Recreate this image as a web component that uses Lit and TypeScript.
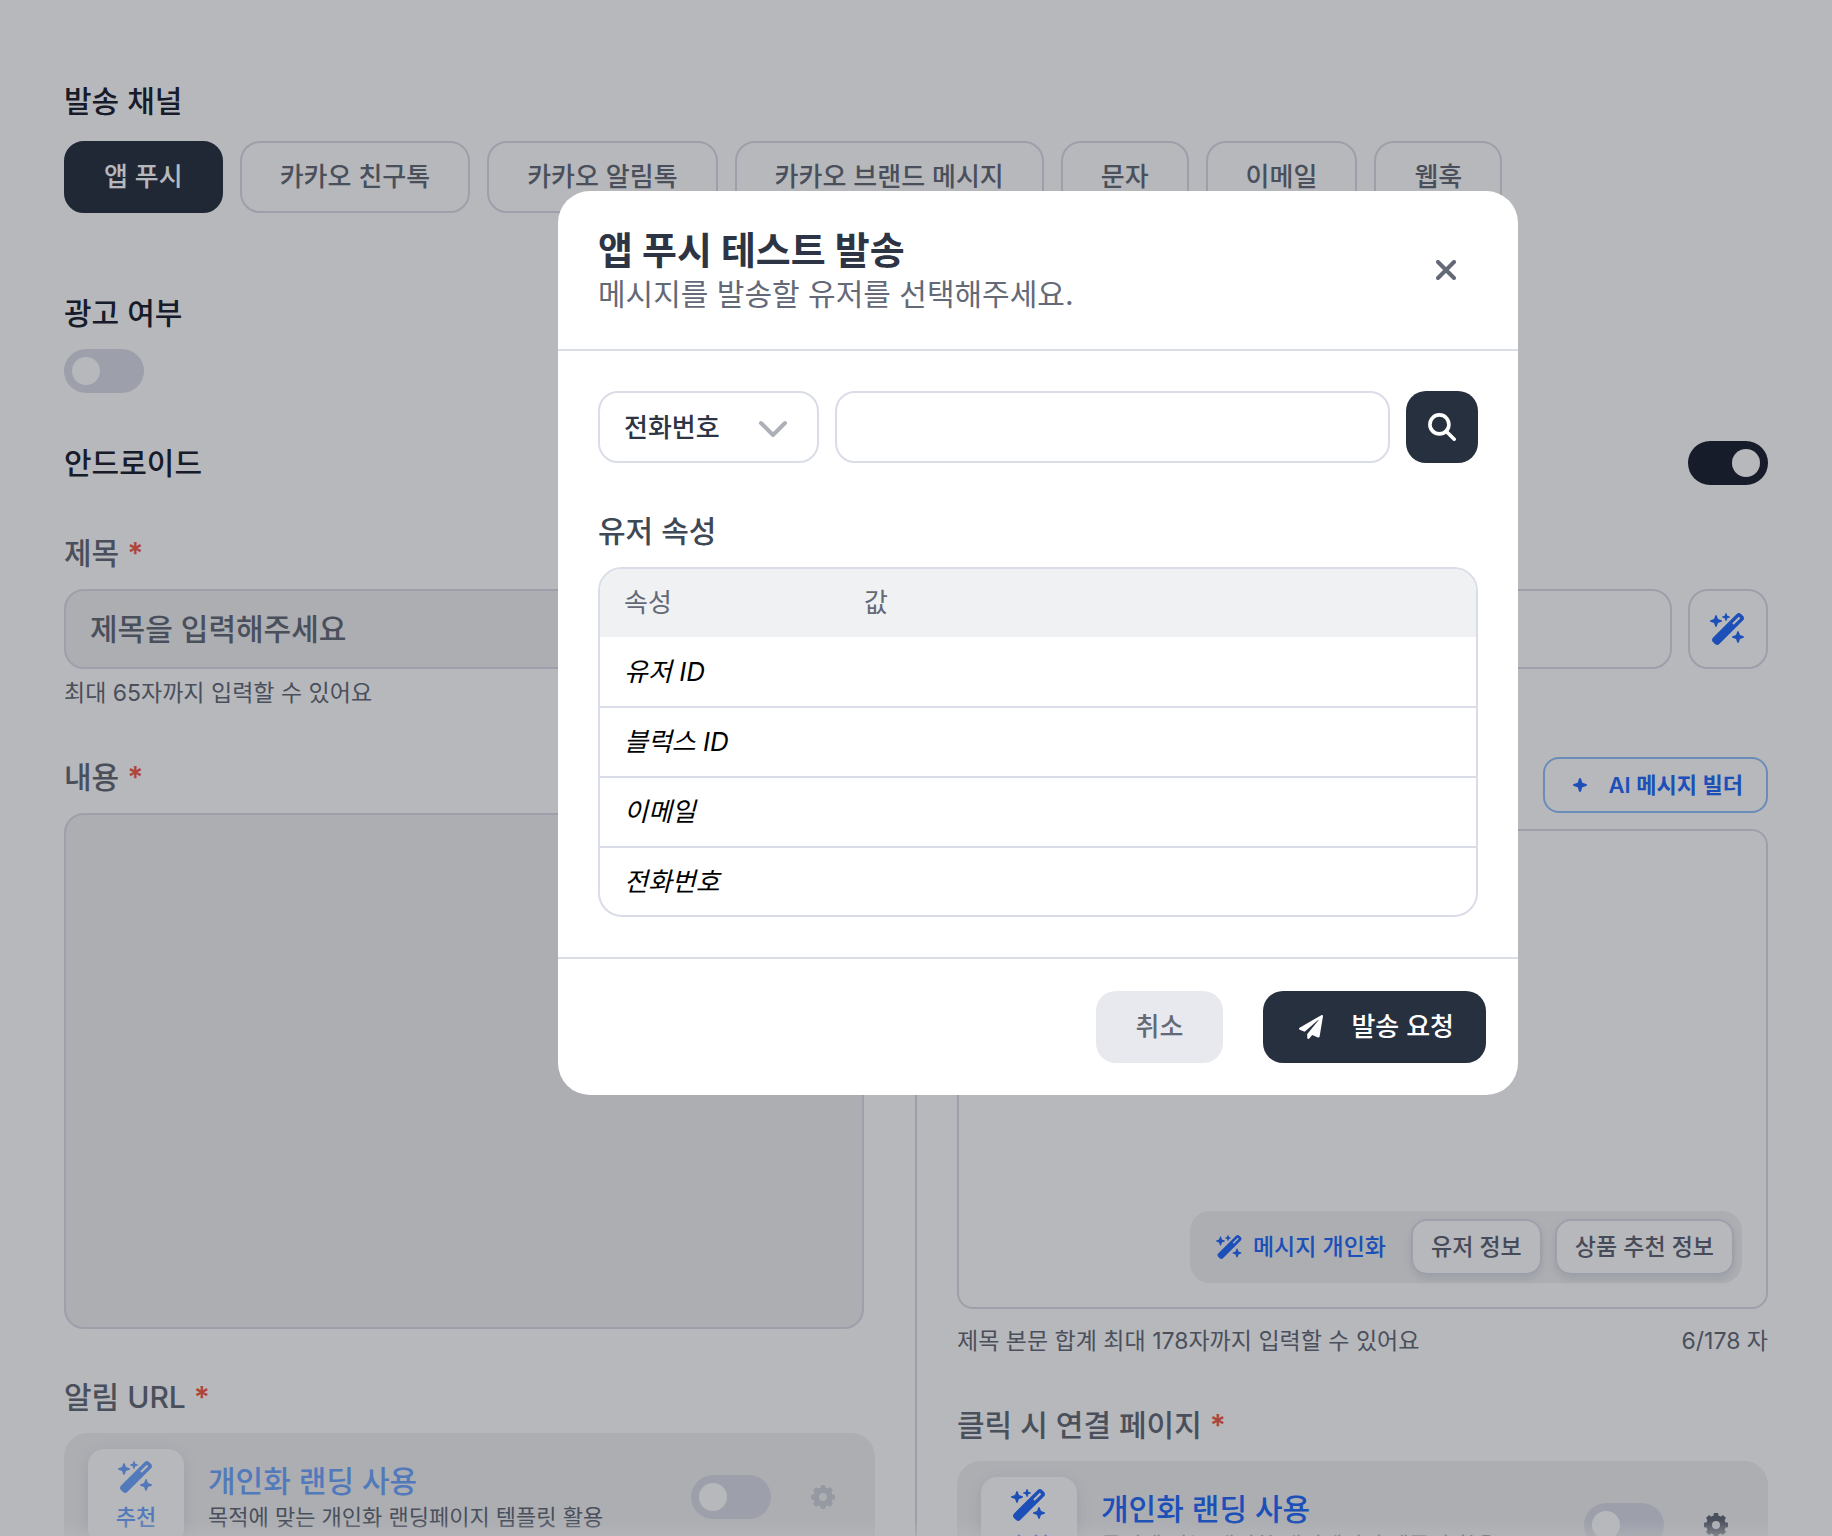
import { LitElement, html, css, svg, nothing } from "lit";
import { customElement, property } from "lit/decorators.js";

const WAND =
  "M234.7 42.7L197 56.8c-3 1.1-5 4-5 7.2s2 6.1 5 7.2l37.7 14.1L248.8 123c1.1 3 4 5 7.2 5s6.1-2 7.2-5l14.1-37.7L315 71.2c3-1.1 5-4 5-7.2s-2-6.1-5-7.2L277.3 42.7 263.2 5c-1.1-3-4-5-7.2-5s-6.1 2-7.2 5L234.7 42.7zM46.1 395.4c-18.7 18.7-18.7 49.1 0 67.9l34.6 34.6c18.7 18.7 49.1 18.7 67.9 0L529.9 116.5c18.7-18.7 18.7-49.1 0-67.9L495.3 14.1c-18.7-18.7-49.1-18.7-67.9 0L46.1 395.4zM484.6 82.6l-105 105-23.3-23.3 105-105 23.3 23.3zM7.5 117.2C3 118.9 0 123.2 0 128s3 9.1 7.5 10.8L64 160l21.2 56.5c1.7 4.5 6 7.5 10.8 7.5s9.1-3 10.8-7.5L128 160l56.5-21.2c4.5-1.7 7.5-6 7.5-10.8s-3-9.1-7.5-10.8L128 96 106.8 39.5C105.1 35 100.8 32 96 32s-9.1 3-10.8 7.5L64 96 7.5 117.2zm352 256c-4.5 1.7-7.5 6-7.5 10.8s3 9.1 7.5 10.8L416 416l21.2 56.5c1.7 4.5 6 7.5 10.8 7.5s9.1-3 10.8-7.5L480 416l56.5-21.2c4.5-1.7 7.5-6 7.5-10.8s-3-9.1-7.5-10.8L480 352l-21.2-56.5c-1.7-4.5-6-7.5-10.8-7.5s-9.1 3-10.8 7.5L416 352l-56.5 21.2z";
const PLANE =
  "M476 3.2L12.5 270.6c-18.1 10.4-15.8 35.6 2.2 43.2L121 358.4l287.3-253.2c5.5-4.9 13.3 2.6 8.6 8.3L176 407v80.5c0 23.6 28.5 32.9 42.5 15.8L282 426l124.6 52.2c14.2 6 30.4-2.9 33-18.2l72-432C515 7.8 493.3-6.8 476 3.2z";

const wand = (size: number) => html`
  <svg width=${(size * 9) / 8} height=${size} viewBox="0 0 576 512" fill="currentColor" aria-hidden="true">
    <path d=${WAND}></path>
  </svg>
`;

const gear = html`
  <svg width="24" height="24" viewBox="0 0 24 24" fill="currentColor" aria-hidden="true">
    <circle cx="12" cy="12" r="6.9" fill="none" stroke="currentColor" stroke-width="5.8"></circle>
    ${[0, 45, 90, 135, 180, 225, 270, 315].map(
      (a) => svg`<rect x="9.6" y="0" width="4.8" height="5" rx="1" transform="rotate(${a} 12 12)"></rect>`
    )}
  </svg>
`;

const base = css`
  * {
    box-sizing: border-box;
  }
  button,
  input,
  select,
  textarea {
    font: inherit;
    color: inherit;
    margin: 0;
    padding: 0;
    outline: none;
  }
  button {
    display: inline-flex;
    align-items: center;
    justify-content: center;
    border: none;
    background: none;
    line-height: 32px;
    white-space: nowrap;
  }
  svg {
    display: block;
    flex: none;
  }
  .toggle {
    appearance: none;
    flex: none;
    display: block;
    width: 80px;
    height: 44px;
    padding: 8px;
    border-radius: 22px;
    background: var(--line);
  }
  .toggle::before {
    content: "";
    display: block;
    width: 28px;
    height: 28px;
    border-radius: 50%;
    background: #fff;
  }
  .toggle:checked {
    background: var(--ink);
  }
  .toggle:checked::before {
    margin-left: auto;
  }
`;

@customElement("landing-card")
class LandingCard extends LitElement {
  @property({ type: Boolean }) muted = false;

  static styles = [
    base,
    css`
      :host {
        display: block;
      }
      .card {
        display: flex;
        align-items: center;
        gap: 24px;
        padding: 16px 24px;
        border-radius: 24px;
        background: var(--fill);
        --accent: var(--blue);
        --gear: var(--gray);
      }
      .card.muted {
        --accent: #6fa6ff;
        --gear: #cfd3dc;
      }
      .badge {
        flex: none;
        display: flex;
        flex-direction: column;
        align-items: center;
        gap: 8px;
        width: 96px;
        height: 96px;
        padding-top: 12px;
        border-radius: 16px;
        background: #fff;
        box-shadow: 0 4px 16px rgba(60, 70, 110, 0.12);
        color: var(--accent);
      }
      .badge span {
        font-size: 22px;
        line-height: 32px;
        font-weight: 500;
      }
      .text {
        flex: 1;
        min-width: 0;
        white-space: nowrap;
      }
      .title {
        font-size: 30px;
        line-height: 40px;
        font-weight: 500;
        color: var(--accent);
      }
      .desc {
        font-size: 22px;
        line-height: 32px;
        color: var(--gray);
      }
      .gear {
        padding: 16px;
        color: var(--gear);
      }
    `,
  ];

  render() {
    return html`
      <div class="card ${this.muted ? "muted" : ""}">
        <div class="badge">${wand(32)}<span>추천</span></div>
        <label class="text" for="use">
          <div class="title">개인화 랜딩 사용</div>
          <div class="desc">목적에 맞는 개인화 랜딩페이지 템플릿 활용</div>
        </label>
        <input id="use" class="toggle" type="checkbox" role="switch" ?disabled=${this.muted} />
        <button class="gear" type="button" aria-label="설정" ?disabled=${this.muted}>${gear}</button>
      </div>
    `;
  }
}

@customElement("test-send-dialog")
class TestSendDialog extends LitElement {
  static styles = [
    base,
    css`
      :host {
        display: block;
        width: 960px;
        max-width: 100%;
      }
      .dialog {
        border-radius: 32px;
        background: #fff;
        overflow: hidden;
      }
      header {
        display: flex;
        align-items: center;
        justify-content: space-between;
        padding: 35px 40px;
        border-bottom: 2px solid var(--line);
      }
      h2 {
        margin: 0;
        font-size: 38px;
        line-height: 48px;
        font-weight: 700;
        color: #2d3544;
      }
      header p {
        margin: 0;
        font-size: 30px;
        line-height: 40px;
        color: var(--gray);
      }
      .close {
        width: 64px;
        height: 64px;
        color: var(--gray);
      }
      .body {
        padding: 40px;
      }
      .search {
        display: flex;
        gap: 16px;
      }
      .select {
        position: relative;
        width: 221px;
        color: #2d3544;
      }
      .select select {
        appearance: none;
        width: 100%;
        height: 72px;
        padding: 0 24px;
        border: 2px solid var(--line);
        border-radius: 20px;
        background: #fff;
        font-size: 26px;
        font-weight: 500;
      }
      .select svg {
        position: absolute;
        right: 30px;
        top: 28px;
        pointer-events: none;
      }
      .query {
        flex: 1;
        min-width: 0;
        height: 72px;
        padding: 0 24px;
        border: 2px solid var(--line);
        border-radius: 20px;
        font-size: 26px;
      }
      .go {
        width: 72px;
        height: 72px;
        border-radius: 20px;
        background: var(--navy);
        color: #fff;
      }
      h3 {
        margin: 48px 0 16px;
        font-size: 30px;
        line-height: 40px;
        font-weight: 500;
        color: #3f4855;
      }
      .table {
        border: 2px solid var(--line);
        border-radius: 24px;
        overflow: hidden;
      }
      table {
        width: 100%;
        border-collapse: collapse;
        table-layout: fixed;
        font-size: 26px;
        line-height: 36px;
      }
      th {
        height: 68px;
        padding: 0 24px;
        background: var(--fill);
        font-weight: 400;
        text-align: left;
        color: var(--gray);
      }
      .name {
        width: 240px;
      }
      td {
        height: 70px;
        padding: 0 24px;
        border-bottom: 2px solid var(--line);
        font-style: italic;
        color: #000;
      }
      tr:last-child td {
        height: 68px;
        border-bottom: none;
      }
      footer {
        display: flex;
        justify-content: flex-end;
        gap: 40px;
        padding: 32px;
        border-top: 2px solid var(--line);
      }
      footer button {
        height: 72px;
        border-radius: 20px;
        font-size: 26px;
        font-weight: 500;
      }
      .cancel {
        padding: 0 40px;
        background: #e8e9ef;
        color: var(--gray);
      }
      .send {
        gap: 28px;
        padding: 0 32px 0 36px;
        background: var(--navy);
        color: #fff;
      }
    `,
  ];

  render() {
    return html`
      <section class="dialog" role="dialog" aria-modal="true" aria-labelledby="dialog-title">
        <header>
          <div>
            <h2 id="dialog-title">앱 푸시 테스트 발송</h2>
            <p>메시지를 발송할 유저를 선택해주세요.</p>
          </div>
          <button class="close" type="button" aria-label="닫기">
            <svg width="20" height="20" viewBox="0 0 20 20" fill="none" stroke="currentColor" stroke-width="4" stroke-linecap="round">
              <path d="M2 2l16 16M18 2L2 18"></path>
            </svg>
          </button>
        </header>
        <div class="body">
          <div class="search">
            <div class="select">
              <select id="field" aria-label="속성">
                <option>전화번호</option>
              </select>
              <svg width="32" height="20" viewBox="0 0 32 20" fill="none" stroke="#adafb9" stroke-width="4" stroke-linecap="round" stroke-linejoin="round">
                <path d="M4 4l12 12L28 4"></path>
              </svg>
            </div>
            <input class="query" type="text" aria-labelledby="field" />
            <button class="go" type="button" aria-label="검색">
              <svg width="28" height="28" viewBox="0 0 28 28" fill="none" stroke="currentColor" stroke-width="3.6" stroke-linecap="round">
                <circle cx="11.4" cy="11.4" r="9.5"></circle>
                <path d="M18.4 18.4l7.8 7.8"></path>
              </svg>
            </button>
          </div>
          <h3>유저 속성</h3>
          <div class="table">
            <table>
              <thead>
                <tr>
                  <th class="name">속성</th>
                  <th>값</th>
                </tr>
              </thead>
              <tbody>
                ${["유저 ID", "블럭스 ID", "이메일", "전화번호"].map(
                  (name) => html`<tr><td>${name}</td><td></td></tr>`
                )}
              </tbody>
            </table>
          </div>
        </div>
        <footer>
          <button class="cancel" type="button">취소</button>
          <button class="send" type="button">
            <svg width="24" height="24" viewBox="0 0 512 512" fill="currentColor" aria-hidden="true">
              <path d=${PLANE}></path>
            </svg>
            발송 요청
          </button>
        </footer>
      </section>
    `;
  }
}

@customElement("app-root")
class AppRoot extends LitElement {
  static styles = [
    base,
    css`
      :host {
        --ink: #19202e;
        --navy: #27303f;
        --gray: #636977;
        --line: #dadde8;
        --fill: #f0f1f3;
        --blue: #2269fb;
        display: block;
        position: relative;
        height: 100vh;
        overflow: hidden;
        background: #fff;
        font-family: Inter, "Noto Sans CJK KR", sans-serif;
        color: var(--ink);
      }
      main {
        padding: 81px 64px 0;
      }
      h1,
      .heading {
        display: block;
        margin: 0;
        font-size: 30px;
        line-height: 40px;
        font-weight: 500;
        color: var(--ink);
      }
      .channels {
        display: flex;
        flex-wrap: wrap;
        gap: 17px;
        margin: 20px 0 80px;
      }
      .channels button {
        height: 72px;
        padding: 0 38px;
        border: 2px solid var(--line);
        border-radius: 20px;
        font-size: 26px;
        font-weight: 500;
        color: var(--gray);
      }
      .channels .active {
        border-color: var(--navy);
        background: var(--navy);
        color: #fff;
      }
      .ad {
        display: grid;
        gap: 16px;
        justify-items: start;
        margin-bottom: 48px;
      }
      .platforms {
        display: grid;
        grid-template-columns: minmax(0, 1fr) 2px minmax(0, 1fr);
        gap: 40px;
      }
      .divider {
        background: var(--line);
      }
      .platform {
        display: grid;
        grid-template-columns: minmax(0, 1fr);
        gap: 48px;
        align-content: start;
      }
      .head {
        display: flex;
        align-items: center;
        justify-content: space-between;
        min-height: 44px;
      }
      .head .toggle {
        margin-left: auto;
      }
      .field {
        display: flex;
        flex-direction: column;
        gap: 16px;
      }
      .label {
        min-height: 40px;
        font-size: 30px;
        line-height: 40px;
        font-weight: 500;
        color: var(--gray);
      }
      .label span {
        font-weight: 600;
        color: #f45a48;
      }
      .control {
        display: flex;
        gap: 16px;
      }
      .input,
      .area {
        display: block;
        border: 2px solid var(--line);
        border-radius: 20px;
        background: transparent;
        font-size: 30px;
        font-weight: 500;
        resize: none;
      }
      .input {
        flex: 1;
        min-width: 0;
        height: 80px;
        padding: 0 24px;
      }
      .input::placeholder {
        color: var(--gray);
        opacity: 1;
      }
      .input:disabled,
      .area:disabled {
        background: var(--fill);
      }
      .area:disabled {
        width: 100%;
        height: 516px;
      }
      .narrow {
        padding-right: 11px;
      }
      .wand {
        width: 80px;
        height: 80px;
        border: 2px solid var(--line);
        border-radius: 20px;
        color: var(--blue);
      }
      .help {
        min-height: 32px;
        font-size: 23px;
        line-height: 32px;
        color: var(--gray);
      }
      .help.near {
        margin-top: -8px;
      }
      .help.split {
        display: flex;
        justify-content: space-between;
      }
      .builder {
        align-self: flex-end;
        gap: 22px;
        height: 56px;
        padding: 0 23px 0 28px;
        border: 2px solid #93c0fd;
        border-radius: 16px;
        font-size: 22px;
        font-weight: 600;
        color: var(--blue);
      }
      .editor {
        display: flex;
        flex-direction: column;
        height: 480px;
        padding-bottom: 24px;
        border: 2px solid var(--line);
        border-radius: 16px;
      }
      .editor textarea {
        flex: 1;
        border: none;
        background: none;
        resize: none;
      }
      .tools {
        align-self: flex-end;
        display: flex;
        align-items: center;
        gap: 13px;
        margin-right: 24px;
        padding: 8px 8px 8px 26px;
        border-radius: 20px;
        background: var(--fill);
        font-size: 23px;
        line-height: 32px;
        font-weight: 500;
      }
      .personal {
        display: flex;
        align-items: center;
        gap: 10px;
        margin-right: 12px;
        color: var(--blue);
      }
      .tools button {
        height: 56px;
        padding: 0 18px;
        border: 2px solid var(--line);
        border-radius: 16px;
        background: #fff;
        box-shadow: 0 4px 8px rgba(60, 70, 110, 0.12);
        color: #5e6473;
      }
      .overlay {
        position: absolute;
        inset: 0;
        display: flex;
        justify-content: center;
        align-items: flex-start;
        padding: 191px 0 0 244px;
        background: rgba(15, 19, 31, 0.3);
      }
      .fade {
        position: absolute;
        inset: auto 0 0 0;
        height: 16px;
        background: linear-gradient(rgba(255, 255, 255, 0), rgba(255, 255, 255, 0.5));
      }
    `,
  ];

  private left() {
    return html`
      <section class="platform">
        <div class="head"><div class="heading">안드로이드</div></div>
        <div class="field">
          <label class="label" for="a-title">제목 <span>*</span></label>
          <div class="control narrow">
            <input id="a-title" class="input" type="text" placeholder="제목을 입력해주세요" disabled />
          </div>
          <div class="help near">최대 65자까지 입력할 수 있어요</div>
        </div>
        <div class="field">
          <label class="label" for="a-body">내용 <span>*</span></label>
          <div class="narrow"><textarea id="a-body" class="area" disabled></textarea></div>
        </div>
        <div class="field">
          <div class="label">알림 URL <span>*</span></div>
          <landing-card muted></landing-card>
        </div>
      </section>
    `;
  }

  private right() {
    return html`
      <section class="platform">
        <div class="head">
          <input class="toggle" type="checkbox" role="switch" aria-label="발송" checked />
        </div>
        <div class="field">
          <div class="label"></div>
          <div class="control">
            <input class="input" type="text" aria-label="제목" />
            <button class="wand" type="button" aria-label="메시지 개인화">${wand(32)}</button>
          </div>
          <div class="help near"></div>
        </div>
        <div class="field">
          <button class="builder" type="button">
            <svg width="14" height="14" viewBox="0 0 14 14" fill="currentColor" aria-hidden="true">
              <path d="M7 0Q7.7 0 8 .8L9.3 4.7 13.2 6Q14 6.300 14 7T13.200 8L9.300 9.300 8 13.200Q7.700 14 7 14T6 13.200L4.700 9.300.8 8Q0 7.700 0 7T.8 6L4.700 4.700 6 .8Q6.300 0 7 0z"></path>
            </svg>
            AI 메시지 빌더
          </button>
          <div class="editor">
            <textarea aria-label="내용"></textarea>
            <div class="tools">
              <span class="personal">${wand(24)}메시지 개인화</span>
              <button type="button">유저 정보</button>
              <button type="button">상품 추천 정보</button>
            </div>
          </div>
          <div class="help split">
            <span>제목 본문 합계 최대 178자까지 입력할 수 있어요</span>
            <span>6/178 자</span>
          </div>
        </div>
        <div class="field">
          <div class="label">클릭 시 연결 페이지 <span>*</span></div>
          <landing-card></landing-card>
        </div>
      </section>
    `;
  }

  render() {
    const channels = ["앱 푸시", "카카오 친구톡", "카카오 알림톡", "카카오 브랜드 메시지", "문자", "이메일", "웹훅"];
    return html`
      <main>
        <h1>발송 채널</h1>
        <div class="channels">
          ${channels.map(
            (name, i) => html`<button type="button" class=${i === 0 ? "active" : nothing}>${name}</button>`
          )}
        </div>
        <div class="ad">
          <label class="heading" for="ad">광고 여부</label>
          <input id="ad" class="toggle" type="checkbox" role="switch" />
        </div>
        <div class="platforms">
          ${this.left()}
          <div class="divider"></div>
          ${this.right()}
        </div>
      </main>
      <div class="fade"></div>
      <div class="overlay"><test-send-dialog></test-send-dialog></div>
    `;
  }
}
